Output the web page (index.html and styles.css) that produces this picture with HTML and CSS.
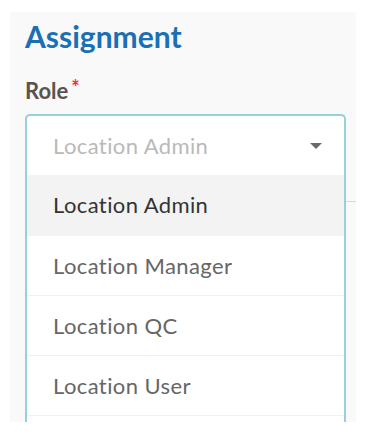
FILE: index.html
```html
<!DOCTYPE html>
<html lang="en">
<head>
    <meta charset="UTF-8">
    <meta name="viewport" content="width=device-width, initial-scale=1.0">
    <title>Assignment</title>
    <link rel="stylesheet" href="styles.css">
</head>
<body>
    <div class="panel">
        <h2 class="title">Assignment</h2>
        <div class="field-label">Role<span class="req">*</span></div>

        <div class="select">
            <div class="select-control">
                <span class="placeholder">Location Admin</span>
                <span class="caret"></span>
            </div>
            <ul class="select-menu">
                <li class="option active">Location Admin</li>
                <li class="option">Location Manager</li>
                <li class="option">Location QC</li>
                <li class="option">Location User</li>
            </ul>
        </div>
    </div>
</body>
</html>
```

FILE: styles.css
```css
body {
    margin: 0;
    background: #fff;
    font-family: Lato, "Open Sans", sans-serif;
}
.panel {
    position: relative;
    margin: 12px 13px 0 10px;
    height: 410px;
    padding: 0 10px 0 15px;
    background: #f9f9f9;
    overflow: hidden;
}
/* line of the form behind the open menu */
.panel::after {
    content: "";
    position: absolute;
    left: 336px;
    right: 0;
    top: 189px;
    border-top: 1px solid #d8d8d8;
}
.title {
    margin: 0;
    padding-top: 6px;
    font-size: 30px;
    font-weight: bold;
    line-height: 36px;
    color: #1b6fb4;
}
.field-label {
    margin-top: 24px;
    font-size: 22px;
    font-weight: bold;
    line-height: 26px;
    color: #5a5350;
}
.req {
    color: #e8333a;
    font-size: 20px;
    vertical-align: top;
    position: relative;
    top: -4px;
    margin-left: 3px;
}
.select {
    margin-top: 10px;
    border: 2px solid #95d0de;
    border-bottom: none;
    border-radius: 5px 5px 0 0;
    background: #fff;
    height: 400px;
}
.select-control {
    display: flex;
    align-items: center;
    justify-content: space-between;
    height: 59px;
    padding: 0 22px 0 26px;
}
.placeholder {
    font-size: 22px;
    letter-spacing: 0.4px;
    color: #b9b9b9;
}
.caret {
    width: 0;
    height: 0;
    border-left: 6px solid transparent;
    border-right: 6px solid transparent;
    border-top: 6px solid #6a6a6a;
}
.select-menu {
    list-style: none;
    margin: 0;
    padding: 0;
}
.option {
    height: 59px;
    line-height: 59px;
    padding-left: 26px;
    font-size: 22px;
    letter-spacing: 0.4px;
    color: #666;
    border-bottom: 1px solid #f1f1f1;
}
.option.active {
    height: 60px;
    line-height: 60px;
    background: #f3f3f3;
    color: #333;
    border-bottom-color: #f3f3f3;
}
```
